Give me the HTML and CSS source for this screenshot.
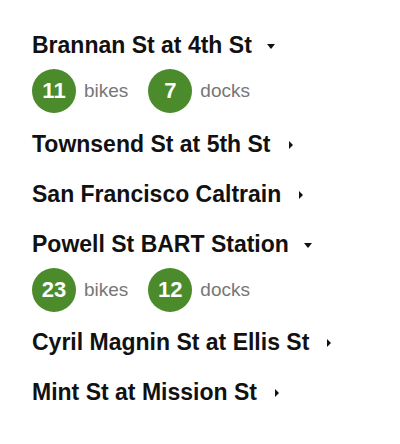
FILE: index.html
```html
<!DOCTYPE html>
<html>
<head>
<meta charset="utf-8">
<link rel="stylesheet" href="styles.css">
</head>
<body>
<ul class="stations">
  <li class="station open">
    <div class="title">Brannan St at 4th St<span class="caret down"></span></div>
    <div class="stats">
      <span class="stat"><span class="count">11</span><span class="label">bikes</span></span>
      <span class="stat"><span class="count">7</span><span class="label">docks</span></span>
    </div>
  </li>
  <li class="station">
    <div class="title">Townsend St at 5th St<span class="caret right"></span></div>
  </li>
  <li class="station">
    <div class="title">San Francisco Caltrain<span class="caret right"></span></div>
  </li>
  <li class="station open">
    <div class="title">Powell St BART Station<span class="caret down"></span></div>
    <div class="stats">
      <span class="stat"><span class="count">23</span><span class="label">bikes</span></span>
      <span class="stat"><span class="count">12</span><span class="label">docks</span></span>
    </div>
  </li>
  <li class="station">
    <div class="title">Cyril Magnin St at Ellis St<span class="caret right"></span></div>
  </li>
  <li class="station">
    <div class="title">Mint St at Mission St<span class="caret right"></span></div>
  </li>
</ul>
</body>
</html>
```
FILE: styles.css
```css
html, body {
  margin: 0;
  padding: 0;
  background: #ffffff;
}
body {
  font-family: "Liberation Sans", Arial, sans-serif;
  color: #111111;
}
.stations {
  list-style: none;
  margin: 0;
  padding: 20px 0 0 32px;
}
.title {
  font-size: 23px;
  font-weight: bold;
  line-height: 28px;
  padding: 11px 0;
  display: flex;
  align-items: center;
}
.caret {
  width: 10px;
  height: 10px;
  margin-left: 15px;
  position: relative;
  top: 1px;
  flex: none;
}
.caret::after {
  content: "";
  position: absolute;
  width: 0;
  height: 0;
}
.caret.down::after {
  left: 0;
  top: 3px;
  border-top: 5px solid #111;
  border-left: 4.5px solid transparent;
  border-right: 4.5px solid transparent;
}
.caret.right::after {
  left: 3px;
  top: 1px;
  border-left: 4.5px solid #111;
  border-top: 4px solid transparent;
  border-bottom: 4px solid transparent;
}
.stats {
  display: flex;
  gap: 20px;
  margin: -1px 0 5.5px;
}
.stat {
  display: flex;
  align-items: center;
  gap: 8px;
}
.count {
  width: 44px;
  height: 44px;
  border-radius: 50%;
  background: #4b8b2b;
  color: #ffffff;
  font-size: 22px;
  font-weight: bold;
  display: flex;
  align-items: center;
  justify-content: center;
}
.label {
  font-size: 19px;
  color: #777777;
}
```
